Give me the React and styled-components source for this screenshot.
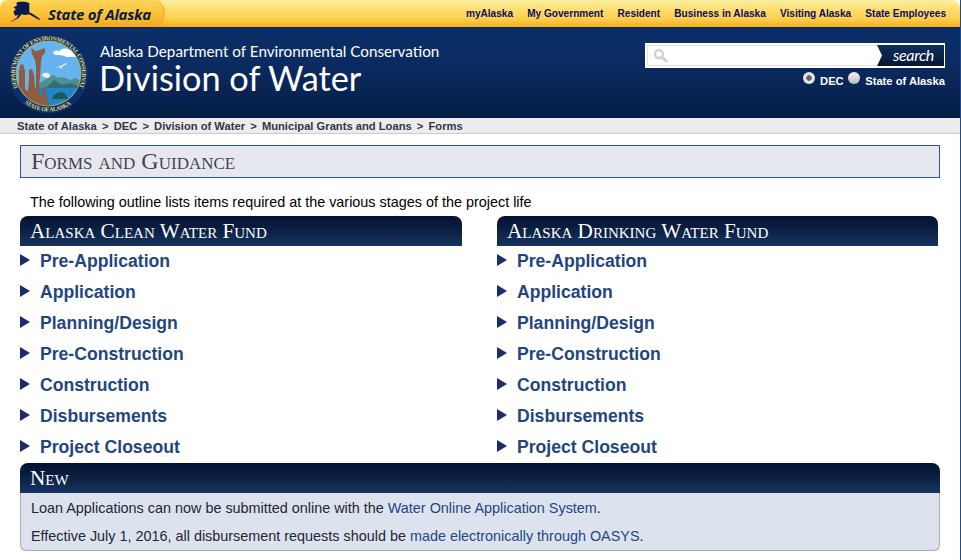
import React from "react";
import styled, { createGlobalStyle } from "styled-components";

const Global = createGlobalStyle`
  html, body { margin: 0; padding: 0; background: #fff; }
  body { font-family: "Liberation Sans", Arial, sans-serif; overflow: hidden; }
`;
const Page = styled.div`
  width: 961px; height: 560px; box-sizing: border-box; overflow: hidden;
  border-right: 1px solid #1d4a8c; background: #fff;
`;
const TopBar = styled.div`
  height: 27px; display: flex; justify-content: space-between; align-items: center;
  background: linear-gradient(#f7f0a6 0, #fde27a 25%, #fdcf4e 70%, #f5ae1c 100%);
  border-top-right-radius: 8px; border-top-left-radius: 5px;
  border-bottom: 1px solid #0a2556; box-sizing: content-box;
`;
const StateTab = styled.div`
  width: 165px; height: 27px; box-sizing: border-box; padding-left: 10px; display: flex; align-items: center; gap: 7px;
  background: linear-gradient(#fdd35b 0, #fdc53a 45%, #f7a81b 100%);
  border-right: 2px solid #f3b52e;
  border-radius: 9px 10px 8px 0 / 9px 14px 13px 0;
`;
const StateName = styled.span`
  font: italic 700 15px "Open Sans", sans-serif; color: #071d4d; letter-spacing: -0.27px; white-space: nowrap;
`;
const TopNav = styled.nav`
  display: flex; gap: 14.2px; padding-right: 14px; margin-top: -1px;
`;
const TopLink = styled.a`
  font-size: 10.08px; font-weight: 700; color: #0b0f5e; white-space: nowrap;
`;
const Banner = styled.header`
  height: 90px; display: flex; justify-content: space-between;
  background: linear-gradient(#0c2f6a 0, #0a2a5f 45%, #051d46 100%);
`;
const Brand = styled.div`
  display: flex; padding: 5px 0 0 8px; gap: 11px;
`;
const BrandText = styled.div`
  display: flex; flex-direction: column; padding-top: 10px; color: #fff;
`;
const Department = styled.div`
  font: 400 15.25px/17px Lato, sans-serif; white-space: nowrap;
`;
const Division = styled.div`
  font: 400 34.3px/34px Lato, sans-serif; white-space: nowrap; margin-left: -1px; margin-top: 1px;
`;
const SearchArea = styled.div`
  width: 300px; margin: 15px 15px 0 0; display: flex; flex-direction: column; align-items: flex-end;
`;
const SearchBox = styled.div`
  width: 300px; height: 25px; background: #fff; box-sizing: border-box; padding: 2px 1px 2px 2px; display: flex; align-items: stretch;
`;
const SearchField = styled.div`
  flex: 1; border: 1px solid #e2e2e2; border-right: 0; display: flex; align-items: center; padding-left: 5px;
`;
const SearchButton = styled.div`
  width: 67px; background: linear-gradient(#0e2f5c, #051733); color: #fff; display: flex; align-items: center; justify-content: center;
  font: italic 400 16px/17px Lato, sans-serif; letter-spacing: -0.4px; padding: 0 0 2px 6px; box-sizing: border-box;
  clip-path: polygon(0 0, 100% 0, 100% 100%, 0 100%, 5px 50%);
`;
const RadioRow = styled.div`
  display: flex; align-items: center; margin-top: 4px; height: 17px;
`;
const Radio = styled.span`
  width: 12px; height: 12px; border-radius: 50%; margin-top: -6px; box-sizing: border-box;
  background: ${p => (p.$on ? "radial-gradient(circle, #666 0 2.5px, #e4e4e4 3px)" : "linear-gradient(#f4f4f4,#bdbdbd)")};
  margin-right: 5.5px;
`;
const RadioLabel = styled.span`
  font-size: 11.2px; font-weight: 700; color: #fff; margin-right: ${p => p.$gap || 0}px; margin-top: 1px; white-space: nowrap;
`;
const Crumbs = styled.div`
  height: 16px; box-sizing: border-box; padding-left: 17px; display: flex; align-items: center; gap: 5.15px;
  background: #ececec; border-bottom: 1px solid #ccc; font-size: 11.2px; font-weight: 700; color: #30354a; white-space: nowrap;
`;
const Main = styled.main`
  padding: 11px 20px 0 20px;
`;
const TitleBox = styled.h1`
  margin: 0; height: 33px; box-sizing: border-box; border: 1px solid #2a5597; background: #e7e8ef;
  font: 400 24px/31px "Liberation Serif", serif; font-variant: small-caps; color: #454545; padding-left: 10px;
`;
const Intro = styled.p`
  margin: 16px 0 0 10px; font-size: 14.4px; line-height: 17px; color: #000; height: 22px; white-space: nowrap;
`;
const Columns = styled.div`
  display: flex; justify-content: flex-start; gap: 35px; height: 247px;
`;
const Column = styled.section`
  width: 442px;
  &:last-child { width: 441px; }
`;
const BarTitle = styled.h2`
  margin: 0; height: 30px; box-sizing: border-box; border-radius: 8px 8px 0 0; color: #fff; padding-left: 10px;
  background: linear-gradient(#041130 0, #0a1e40 40%, #16345f 100%);
  font: 400 21.2px/31px "Liberation Serif", serif; font-variant: small-caps; white-space: nowrap;
`;
const Stages = styled.ul`
  list-style: none; margin: 0; padding: 0;
`;
const Stage = styled.li`
  height: 31px; display: flex; align-items: center; gap: 10px; font-size: 17.6px; font-weight: 700; color: #1f4680;
`;
const Arrow = styled.span`
  width: 0; height: 0; margin-top: -4px; border-left: 10px solid #1d2c6c; border-top: 6.5px solid transparent; border-bottom: 6.5px solid transparent;
`;
const NewPanel = styled.section`
  margin-top: 0;
`;
const NewBody = styled.div`
  height: 58px; box-sizing: border-box; background: #dde2ef; border: 1px solid #a9abb2; border-top: 0; border-radius: 0 0 6px 6px; padding: 7px 10px 0;
  font-size: 14.4px; line-height: 17px; color: #222733;
`;
const NewLine = styled.p`
  margin: 0 0 11px; white-space: nowrap;
`;
const BlueText = styled.span`
  color: #1f4680;
`;

const AlaskaShape = () => (
  <svg width="31" height="22" viewBox="0 0 31 22" style={{ flex: "none", marginTop: -3 }}>
    <polygon fill="#071d4d" points="9.3,.7 15,.7 19.3,2 19.3,11.3 23.3,13.3 30,18 29.3,19 23.3,15.7 19.3,13.3 15,14 11.7,13.3 8.3,17.3 0,21.3 1.7,20 6.7,16.7 8.3,14 5,14.7 3.3,10.7 6,8 3.3,6.7 7.3,4 6,2" />
  </svg>
);

const Seal = () => (
  <svg width="81" height="81" viewBox="0 0 81 81" style={{ flex: "none" }}>
    <defs>
      <clipPath id="inner"><circle cx="40.5" cy="40.5" r="32" /></clipPath>
      <path id="topArc" d="M10.1 54.7A33.5 33.5 0 1 1 70.9 54.7" />
      <path id="botArc" d="M16.5 70A38 38 0 0 0 64.5 70" />
    </defs>
    <circle cx="40.5" cy="40.5" r="40" fill="#0c2f6c" />
    <circle cx="40.5" cy="40.5" r="32.5" fill="#66b4ef" stroke="#caba45" strokeWidth="0.8" />
    <g clipPath="url(#inner)">
      <polygon fill="#4f8f90" points="28,55 32,50 45,42 50,45 55,44 62,47 68,45 78,52 78,60 28,60" />
      <polygon fill="#2f6f72" points="38,55 46,47 54,52 62,50 76,55" />
      <rect x="30" y="55" width="50" height="22" fill="#1f86c9" />
      <path fill="#1d5a52" d="M44 66c1-4 5-7 9-7 3 0 6 3 7 7z" />
      <path fill="#fff" d="M45 20c1-3 5-3 6-1 1-3 7-5 10-2 2-1 4 0 4 2 3 0 4 3 3 5H58c-2-2-5-1-7-2-2 0-5 0-6-2z" />
      <path fill="#f1f4f6" d="M34 43c0-2 2-4 4-3 2-1 4 1 4 4l-3 1-3-1z" />
      <path fill="#e4e8ea" d="M47 35l5-2 6-3 1 1-4 2-2 3-2-2z" />
      <path fill="#8f5c42" d="M23 15l5 3 4-1 5-2 0 5-3 3-1 6-1 14-1 14 1 6 3-2 0-7 2-1 1 8 2 8 4 7H20L9 60l-1-8 3 1 0-14 1-7 3-1 2 7 0 18 3 2 1-11 0-10 3-1 2 6 1 14 1-2 0-21-1-6-3-6z" />
    </g>
    <text fontFamily="Liberation Serif, serif" fontSize="6" fontWeight="700" fill="#e6dc6c">
      <textPath href="#topArc" textLength="144" lengthAdjust="spacing">DEPARTMENT OF ENVIRONMENTAL CONSERVATION</textPath>
    </text>
    <text fontFamily="Liberation Serif, serif" fontSize="6" fontWeight="700" fill="#e6dc6c">
      <textPath href="#botArc" textLength="50" lengthAdjust="spacing">STATE OF ALASKA</textPath>
    </text>
  </svg>
);

const SearchIcon = () => (
  <svg width="16" height="16" viewBox="0 0 16 16">
    <circle cx="6" cy="6" r="4" fill="none" stroke="#d2d2d2" strokeWidth="2.4" />
    <path d="M9 9l5 5" stroke="#d2d2d2" strokeWidth="3" />
  </svg>
);

const stages = ["Pre-Application", "Application", "Planning/Design", "Pre-Construction", "Construction", "Disbursements", "Project Closeout"];
const navLinks = ["myAlaska", "My Government", "Resident", "Business in Alaska", "Visiting Alaska", "State Employees"];
const crumbs = ["State of Alaska", ">", "DEC", ">", "Division of Water", ">", "Municipal Grants and Loans", ">", "Forms"];

const FundColumn = ({ title }) => (
  <Column>
    <BarTitle>{title}</BarTitle>
    <Stages>
      {stages.map(s => (
        <Stage key={s}><Arrow />{s}</Stage>
      ))}
    </Stages>
  </Column>
);

export default function App() {
  return (
    <Page>
      <Global />
      <TopBar>
        <StateTab><AlaskaShape /><StateName>State of Alaska</StateName></StateTab>
        <TopNav>{navLinks.map(l => <TopLink key={l}>{l}</TopLink>)}</TopNav>
      </TopBar>
      <Banner>
        <Brand>
          <Seal />
          <BrandText>
            <Department>Alaska Department of Environmental Conservation</Department>
            <Division>Division of Water</Division>
          </BrandText>
        </Brand>
        <SearchArea>
          <SearchBox>
            <SearchField><SearchIcon /></SearchField>
            <SearchButton>search</SearchButton>
          </SearchBox>
          <RadioRow>
            <Radio $on /><RadioLabel $gap={4}>DEC</RadioLabel>
            <Radio /><RadioLabel>State of Alaska</RadioLabel>
          </RadioRow>
        </SearchArea>
      </Banner>
      <Crumbs>{crumbs.map((c, i) => <span key={i}>{c}</span>)}</Crumbs>
      <Main>
        <TitleBox>Forms and Guidance</TitleBox>
        <Intro>The following outline lists items required at the various stages of the project life</Intro>
        <Columns>
          <FundColumn title="Alaska Clean Water Fund" />
          <FundColumn title="Alaska Drinking Water Fund" />
        </Columns>
        <NewPanel>
          <BarTitle>New</BarTitle>
          <NewBody>
            <NewLine>Loan Applications can now be submitted online with the <BlueText>Water Online Application System</BlueText>.</NewLine>
            <NewLine>Effective July 1, 2016, all disbursement requests should be <BlueText>made electronically through OASYS</BlueText>.</NewLine>
          </NewBody>
        </NewPanel>
      </Main>
    </Page>
  );
}
